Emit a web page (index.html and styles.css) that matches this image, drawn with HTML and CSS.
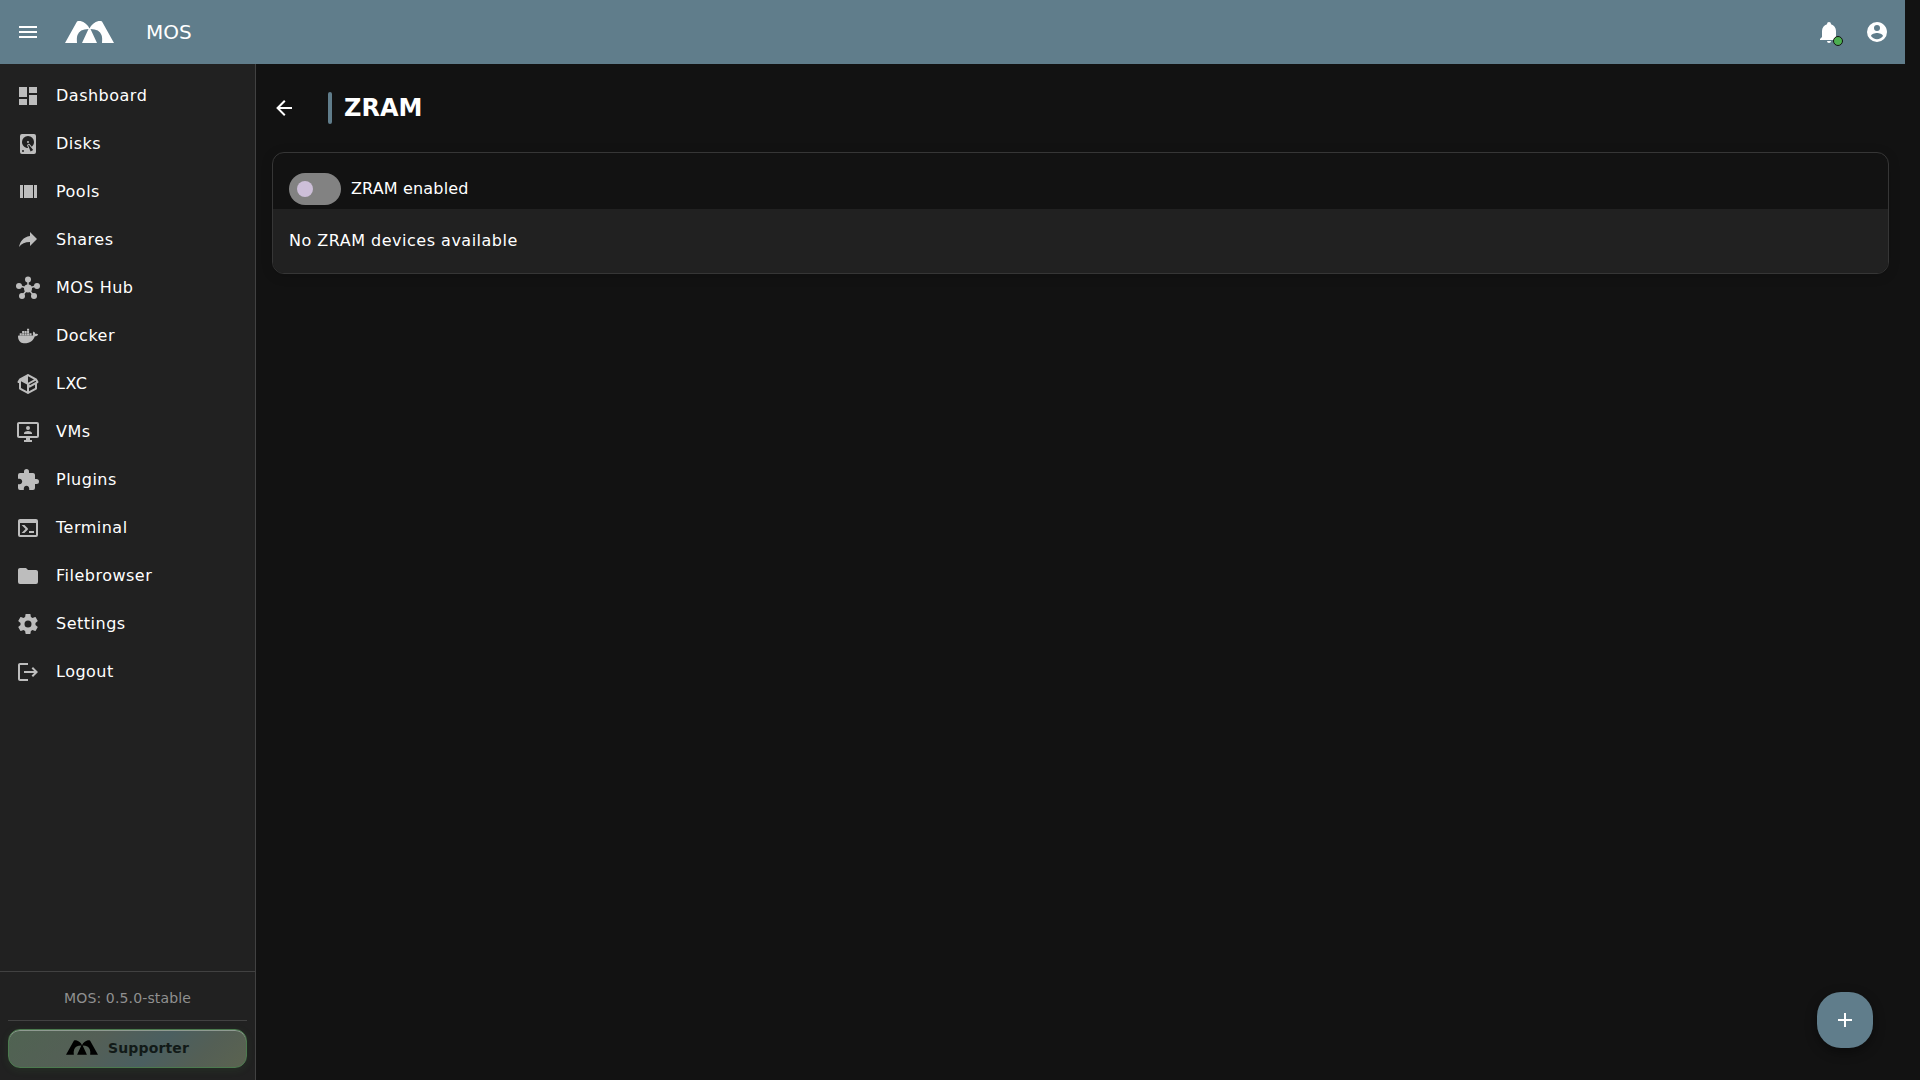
FILE: index.html
```html
<!DOCTYPE html>
<html lang="en">
<head>
    <meta charset="UTF-8">
    <meta name="viewport" content="width=device-width, initial-scale=1.0">
    <title>MOS - ZRAM</title>
    <link rel="stylesheet" href="styles.css">
</head>
<body>
    <!-- Shared logo -->
    <svg class="defs" aria-hidden="true">
        <symbol id="logo" viewBox="0 0 98 44">
            <path d="M0 44L24 1L26 0H31Q43 3 49 15Q55 3 67 0H72L74 1L98 44H74Q75 33 73 28Q69 16 51 16L64 44H34L47 16Q29 16 25 28Q23 33 24 44Z"/>
        </symbol>
    </svg>

    <header class="app-bar">
        <button class="icon-btn" type="button" aria-label="Menu">
            <svg class="icon" viewBox="0 0 24 24"><path d="M3,6H21V8H3V6M3,11H21V13H3V11M3,16H21V18H3V16Z"/></svg>
        </button>
        <svg class="app-logo"><use href="#logo"/></svg>
        <span class="app-title">MOS</span>
        <div class="app-actions">
            <button class="icon-btn" type="button" aria-label="Notifications">
                <svg class="icon" viewBox="0 0 24 24"><path d="M21,19V20H3V19L5,17V11C5,7.9 7.03,5.17 10,4.29C10,4.19 10,4.1 10,4A2,2 0 0,1 12,2A2,2 0 0,1 14,4C14,4.1 14,4.19 14,4.29C16.97,5.17 19,7.9 19,11V17L21,19M14,21A2,2 0 0,1 12,23A2,2 0 0,1 10,21"/></svg>
                <span class="status-dot"></span>
            </button>
            <button class="icon-btn" type="button" aria-label="Account">
                <svg class="icon" viewBox="0 0 24 24"><path d="M12,19.2C9.5,19.2 7.29,17.92 6,16C6.03,14 10,12.9 12,12.9C14,12.9 17.97,14 18,16C16.71,17.92 14.5,19.2 12,19.2M12,5A3,3 0 0,1 15,8A3,3 0 0,1 12,11A3,3 0 0,1 9,8A3,3 0 0,1 12,5M12,2A10,10 0 0,0 2,12A10,10 0 0,0 12,22A10,10 0 0,0 22,12C22,6.47 17.5,2 12,2Z"/></svg>
            </button>
        </div>
    </header>

    <div class="layout">
        <aside class="sidebar">
            <nav>
                <ul>
                    <li><a href="#dashboard"><svg class="icon" viewBox="0 0 24 24"><path d="M13,3V9H21V3M13,21H21V11H13M3,21H11V15H3M3,13H11V3H3V13Z"/></svg>Dashboard</a></li>
                    <li><a href="#disks"><svg class="icon" viewBox="0 0 24 24"><path d="M6,2H18A2,2 0 0,1 20,4V20A2,2 0 0,1 18,22H6A2,2 0 0,1 4,20V4A2,2 0 0,1 6,2M12,4A6,6 0 0,0 6,10C6,13.31 8.69,16 12.1,16L11.22,13.77C10.95,13.29 11.11,12.68 11.59,12.4L12.45,11.9C12.93,11.63 13.54,11.79 13.82,12.27L15.74,14.69C17.12,13.59 18,11.9 18,10A6,6 0 0,0 12,4M12,9A1,1 0 0,1 13,10A1,1 0 0,1 12,11A1,1 0 0,1 11,10A1,1 0 0,1 12,9M7,18A1,1 0 0,0 6,19A1,1 0 0,0 7,20A1,1 0 0,0 8,19A1,1 0 0,0 7,18M12.09,13.27L14.58,19.58L17.17,18.08L12.95,12.77L12.09,13.27Z"/></svg>Disks</a></li>
                    <li><a href="#pools"><svg class="icon" viewBox="0 0 24 24"><path d="M8,18H17V5H8M18,5V18H21V5M4,18H7V5H4V18Z"/></svg>Pools</a></li>
                    <li><a href="#shares"><svg class="icon" viewBox="0 0 24 24"><path d="M21,11L14,4V8C7,9 4,14 3,19C5.5,15.5 9,13.9 14,13.9V18L21,11Z"/></svg>Shares</a></li>
                    <li><a href="#hub"><svg class="icon" viewBox="0 0 24 24"><path d="M12,12.5V3M12,12.5L3,9.5M12,12.5L21,9.5M12,12.5L6,20M12,12.5L18,20" stroke="currentColor" stroke-width="1.5"/><circle cx="12" cy="12.5" r="4"/><circle cx="12" cy="3.5" r="3"/><circle cx="3" cy="10" r="3"/><circle cx="21" cy="10" r="3"/><circle cx="6" cy="20" r="3"/><circle cx="18" cy="20" r="3"/></svg>MOS Hub</a></li>
                    <li><a href="#docker"><svg class="icon" viewBox="0 0 24 24"><path d="M21.81 10.25C21.75 10.21 21.25 9.82 20.17 9.82C19.89 9.82 19.61 9.85 19.33 9.9C19.12 8.5 17.95 7.79 17.9 7.76L17.61 7.59L17.43 7.86C17.19 8.22 17 8.63 16.92 9.05C16.72 9.85 16.84 10.61 17.25 11.26C16.76 11.54 15.96 11.61 15.79 11.61H2.62C2.28 11.61 2 11.89 2 12.24C2 13.39 2.18 14.54 2.58 15.62C3.03 16.81 3.71 17.69 4.58 18.23C5.56 18.83 7.17 19.17 9 19.17C9.79 19.17 10.61 19.1 11.42 18.95C12.54 18.75 13.62 18.36 14.61 17.79C15.43 17.32 16.16 16.72 16.78 16C17.82 14.83 18.43 13.5 18.89 12.35H19.08C20.23 12.35 20.94 11.89 21.33 11.5C21.59 11.26 21.78 10.97 21.92 10.63L22 10.39L21.81 10.25M3.7 9.34H5.77V11.24H3.7ZM6.13 9.34H8.2V11.24H6.13ZM8.6 9.34H10.67V11.24H8.6ZM11.04 9.34H13.11V11.24H11.04ZM13.5 9.34H15.57V11.24H13.5ZM6.13 7.05H8.2V8.95H6.13ZM8.6 7.05H10.67V8.95H8.6ZM11.04 7.05H13.11V8.95H11.04ZM11.04 4.77H13.11V6.67H11.04Z"/></svg>Docker</a></li>
                    <li><a href="#lxc"><svg class="icon" viewBox="0 0 24 24"><path d="M2,10.96C1.5,10.68 1.35,10.07 1.63,9.59L3.13,7C3.24,6.8 3.41,6.66 3.6,6.58L11.43,2.18C11.59,2.06 11.79,2 12,2C12.21,2 12.41,2.06 12.57,2.18L20.47,6.62C20.66,6.72 20.82,6.88 20.91,7.08L22.36,9.6C22.64,10.08 22.47,10.69 22,10.96L21,11.54V16.5C21,16.88 20.79,17.21 20.47,17.38L12.57,21.82C12.41,21.94 12.21,22 12,22C11.79,22 11.59,21.94 11.43,21.82L3.53,17.38C3.21,17.21 3,16.88 3,16.5V10.96C2.7,11.13 2.32,11.14 2,10.96M12,4.15V10.85L17.96,7.5L12,4.15M5,15.91L11,19.29V12.58L5,9.21V15.91M19,15.91V12.69L14,15.59C13.67,15.77 13.3,15.76 13,15.6V19.29L19,15.91M13.85,13.36L20.13,9.73L19.55,8.72L13.27,12.35L13.85,13.36Z"/></svg>LXC</a></li>
                    <li><a href="#vms"><svg class="icon" viewBox="0 0 24 24"><path d="M21,16V4H3V16H21M21,2A2,2 0 0,1 23,4V16A2,2 0 0,1 21,18H14V20H16V22H8V20H10V18H3C1.89,18 1,17.1 1,16V4C1,2.89 1.89,2 3,2H21M12,6A2,2 0 0,1 14,8A2,2 0 0,1 12,10A2,2 0 0,1 10,8A2,2 0 0,1 12,6M8,14V13C8,11.67 10.67,11 12,11C13.33,11 16,11.67 16,13V14H8Z"/></svg>VMs</a></li>
                    <li><a href="#plugins"><svg class="icon" viewBox="0 0 24 24"><path d="M20.5,11H19V7C19,5.89 18.1,5 17,5H13V3.5A2.5,2.5 0 0,0 10.5,1A2.5,2.5 0 0,0 8,3.5V5H4A2,2 0 0,0 2,7V10.8H3.5C5,10.8 6.2,12 6.2,13.5C6.2,15 5,16.2 3.5,16.2H2V20A2,2 0 0,0 4,22H7.8V20.5C7.8,19 9,17.8 10.5,17.8C12,17.8 13.2,19 13.2,20.5V22H17A2,2 0 0,0 19,20V16H20.5A2.5,2.5 0 0,0 23,13.5A2.5,2.5 0 0,0 20.5,11Z"/></svg>Plugins</a></li>
                    <li><a href="#terminal"><svg class="icon" viewBox="0 0 24 24"><path d="M20,19V7H4V19H20M20,3A2,2 0 0,1 22,5V19A2,2 0 0,1 20,21H4A2,2 0 0,1 2,19V5C2,3.89 2.9,3 4,3H20M13,17V15H18V17H13M9.58,13L5.57,9H8.4L11.7,12.3C12.09,12.69 12.09,13.33 11.7,13.72L8.42,17H5.59L9.58,13Z"/></svg>Terminal</a></li>
                    <li><a href="#filebrowser"><svg class="icon" viewBox="0 0 24 24"><path d="M10,4H4C2.89,4 2,4.89 2,6V18A2,2 0 0,0 4,20H20A2,2 0 0,0 22,18V8C22,6.89 21.1,6 20,6H12L10,4Z"/></svg>Filebrowser</a></li>
                    <li><a href="#settings"><svg class="icon" viewBox="0 0 24 24"><path d="M12,15.5A3.5,3.5 0 0,1 8.5,12A3.5,3.5 0 0,1 12,8.5A3.5,3.5 0 0,1 15.5,12A3.5,3.5 0 0,1 12,15.5M19.43,12.97C19.47,12.65 19.5,12.33 19.5,12C19.5,11.67 19.47,11.34 19.43,11L21.54,9.37C21.73,9.22 21.78,8.95 21.66,8.73L19.66,5.27C19.54,5.05 19.27,4.96 19.05,5.05L16.56,6.05C16.04,5.66 15.5,5.32 14.87,5.07L14.5,2.42C14.46,2.18 14.25,2 14,2H10C9.75,2 9.54,2.18 9.5,2.42L9.13,5.07C8.5,5.32 7.96,5.66 7.44,6.05L4.95,5.05C4.73,4.96 4.46,5.05 4.34,5.27L2.34,8.73C2.21,8.95 2.27,9.22 2.46,9.37L4.57,11C4.53,11.34 4.5,11.67 4.5,12C4.5,12.33 4.53,12.65 4.57,12.97L2.46,14.63C2.27,14.78 2.21,15.05 2.34,15.27L4.34,18.73C4.46,18.95 4.73,19.03 4.95,18.95L7.44,17.94C7.96,18.34 8.5,18.68 9.13,18.93L9.5,21.58C9.54,21.82 9.75,22 10,22H14C14.25,22 14.46,21.82 14.5,21.58L14.87,18.93C15.5,18.67 16.04,18.34 16.56,17.94L19.05,18.95C19.27,19.03 19.54,18.95 19.66,18.73L21.66,15.27C21.78,15.05 21.73,14.78 21.54,14.63L19.43,12.97Z"/></svg>Settings</a></li>
                    <li><a href="#logout"><svg class="icon" viewBox="0 0 24 24"><path d="M17 7L15.59 8.41L18.17 11H8V13H18.17L15.59 15.58L17 17L22 12M4 5H12V3H4C2.9 3 2 3.9 2 5V19C2 20.1 2.9 21 4 21H12V19H4V5Z"/></svg>Logout</a></li>
                </ul>
            </nav>
            <div class="sidebar-footer">
                <p class="version">MOS: 0.5.0-stable</p>
                <hr>
                <button class="supporter" type="button">
                    <svg class="supporter-logo"><use href="#logo"/></svg>
                    Supporter
                </button>
            </div>
        </aside>

        <main>
            <div class="page-title">
                <button class="icon-btn" type="button" aria-label="Back">
                    <svg class="icon" viewBox="0 0 24 24"><path d="M20,11V13H8L13.5,18.5L12.08,19.92L4.16,12L12.08,4.08L13.5,5.5L8,11H20Z"/></svg>
                </button>
                <h1>ZRAM</h1>
            </div>

            <section class="card">
                <div class="card-head">
                    <input class="switch" type="checkbox" id="zramEnabled">
                    <label for="zramEnabled">ZRAM enabled</label>
                </div>
                <p class="card-body">No ZRAM devices available</p>
            </section>
        </main>
    </div>

    <button class="fab" type="button" aria-label="Add">
        <svg class="icon" viewBox="0 0 24 24"><path d="M19,13H13V19H11V13H5V11H11V5H13V11H19V13Z"/></svg>
    </button>
</body>
</html>
```
FILE: styles.css
```css
* {
    box-sizing: border-box;
}

body {
    margin: 0;
    padding-right: 15px;
    min-height: 100vh;
    display: flex;
    flex-direction: column;
    background-color: #121212;
    color: #fff;
    font-family: "DejaVu Sans", sans-serif;
    font-size: 16px;
    line-height: 24px;
}

button {
    border: none;
    padding: 0;
    color: inherit;
    font-family: inherit;
    cursor: pointer;
}

.defs {
    position: absolute;
    width: 0;
    height: 0;
}

.icon {
    display: block;
    width: 24px;
    height: 24px;
    flex-shrink: 0;
    fill: currentColor;
    overflow: visible;
}

.icon-btn {
    position: relative;
    display: flex;
    align-items: center;
    justify-content: center;
    width: 48px;
    height: 48px;
    border-radius: 50%;
    background: none;
}

/* Top bar */
.app-bar {
    display: flex;
    align-items: center;
    height: 64px;
    padding: 0 4px;
    background-color: #607d8b;
}

.app-logo {
    width: 49px;
    height: 22px;
    margin-left: 13px;
    fill: #fff;
}

.app-title {
    margin-left: 32px;
    font-size: 20px;
}

.app-actions {
    display: flex;
    margin-left: auto;
}

.status-dot {
    position: absolute;
    right: 10px;
    bottom: 10px;
    width: 10px;
    height: 10px;
    border: 1px solid #121212;
    border-radius: 50%;
    background-color: #4caf50;
}

.layout {
    flex: 1;
    display: flex;
}

/* Sidebar */
.sidebar {
    display: flex;
    flex-direction: column;
    width: 256px;
    flex-shrink: 0;
    border-right: 1px solid #414141;
    background-color: #212121;
}

nav {
    flex: 1;
    padding: 8px 0;
}

nav ul {
    list-style: none;
    margin: 0;
    padding: 0;
}

nav a {
    display: flex;
    align-items: center;
    gap: 16px;
    height: 48px;
    padding: 0 16px;
    color: #fff;
    letter-spacing: 0.03125em;
    text-decoration: none;
}

nav .icon {
    color: #bdbdbd;
}

nav a:hover {
    background-color: #2c2c2c;
}

.sidebar-footer {
    padding: 0 8px 12px;
    border-top: 1px solid #414141;
}

.version {
    margin: 0;
    padding: 14px 0 10px;
    color: #909090;
    font-size: 14px;
    letter-spacing: 0.01em;
    text-align: center;
}

.sidebar-footer hr {
    height: 1px;
    margin: 0 0 8px;
    border: none;
    background-color: #414141;
}

.supporter {
    display: flex;
    align-items: center;
    justify-content: center;
    gap: 10px;
    width: 100%;
    height: 39px;
    padding-bottom: 2px;
    border: 1px solid #4b7a4e;
    border-radius: 12px;
    background: linear-gradient(135deg, #506352 0%, #545f56 35%, #4b5f60 60%, #545f55 80%, #5b6350 100%);
    box-shadow: inset 0 1px 0 #8f9a91, 0 2px 8px rgba(76, 175, 80, 0.1);
    color: #121a18;
    font-size: 14px;
    font-weight: bold;
    letter-spacing: 0.01em;
}

.supporter-logo {
    width: 32px;
    height: 15px;
    fill: #000;
}

/* Content */
main {
    flex: 1;
    padding: 20px 16px;
}

.page-title {
    display: flex;
    align-items: center;
    gap: 20px;
    margin: 0 0 20px -12px;
}

h1 {
    margin: 0;
    padding-left: 16px;
    position: relative;
    font-size: 24px;
    line-height: 32px;
}

/* Accent bar beside the heading */
h1::before {
    content: "";
    position: absolute;
    left: 0;
    top: 0;
    width: 4px;
    height: 100%;
    border-radius: 2px;
    background-color: #607d8b;
}

.card {
    border: 1px solid #363636;
    border-radius: 12px;
    overflow: hidden;
    box-shadow: 0 2px 12px rgba(0, 0, 0, 0.15);
}

.card-head {
    display: flex;
    align-items: center;
    gap: 10px;
    padding: 20px 16px 4px;
    letter-spacing: 0.01em;
}

.switch {
    appearance: none;
    display: flex;
    align-items: center;
    width: 52px;
    height: 32px;
    margin: 0;
    padding: 0 8px;
    border-radius: 16px;
    background-color: #828282;
    cursor: pointer;
}

.switch::before {
    content: "";
    width: 16px;
    height: 16px;
    border-radius: 50%;
    background-color: #cdbfd9;
}

.switch:checked {
    justify-content: flex-end;
    background-color: #607d8b;
}

.card-body {
    margin: 0;
    padding: 20px 16px;
    background-color: #212121;
    letter-spacing: 0.03125em;
}

.fab {
    position: fixed;
    right: 47px;
    bottom: 32px;
    display: flex;
    align-items: center;
    justify-content: center;
    width: 56px;
    height: 56px;
    border-radius: 24px;
    background-color: #607d8b;
    box-shadow: 0 4px 12px rgba(0, 0, 0, 0.4);
}
```
